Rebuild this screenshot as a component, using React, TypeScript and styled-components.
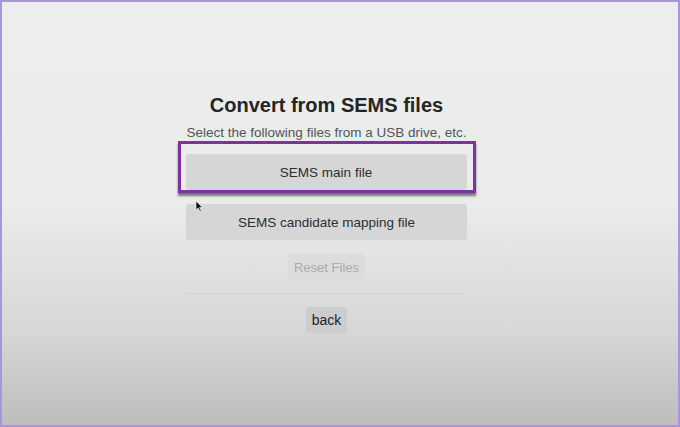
import styled, { createGlobalStyle } from "styled-components";

const GlobalStyle = createGlobalStyle`
  html, body {
    margin: 0;
    padding: 0;
  }
  body {
    font-family: "Liberation Sans", Arial, sans-serif;
  }
`;

const Screen = styled.div`
  box-sizing: border-box;
  width: 680px;
  height: 427px;
  border: 2px solid #ab95da;
  background: linear-gradient(
    #eceded 0%,
    #eaebeb 48%,
    #d6d7d7 78%,
    #bdbdbd 100%
  );
  display: flex;
  justify-content: center;
  padding: 92px 27px 0 0;
  overflow: hidden;
`;

const Column = styled.div`
  width: 281px;
  display: flex;
  flex-direction: column;
  align-items: center;
  position: relative;
`;

const Title = styled.h1`
  margin: 0;
  font-size: 20px;
  line-height: 23px;
  font-weight: 700;
  color: #252525;
  white-space: nowrap;
`;

const Subtitle = styled.p`
  margin: 8px 0 0;
  font-size: 13.5px;
  line-height: 16px;
  color: #555;
  white-space: nowrap;
`;

const FocusRing = styled.div`
  box-sizing: border-box;
  width: 298px;
  margin-top: 0;
  padding: 10px 5px 0;
  border: 3px solid #7d32a2;
  box-shadow: 0 3px 2px rgba(40, 40, 40, 0.6);
`;

const Button = styled.button<{ $wide?: boolean; $disabled?: boolean }>`
  box-sizing: border-box;
  border: none;
  border-radius: 3px;
  font-family: "Liberation Sans", Arial, sans-serif;
  cursor: pointer;
  width: ${(p) => (p.$wide ? "281px" : "auto")};
  height: ${(p) => (p.$wide ? "36px" : "26px")};
  padding: ${(p) => (p.$wide ? "0" : "0 6px")};
  font-size: ${(p) => (p.$wide ? "13.5px" : "13px")};
  background: ${(p) => (p.$disabled ? "#dcdcdc" : "#d6d6d6")};
  color: ${(p) => (p.$disabled ? "#ababab" : "#2e2e2e")};
`;

const BackButton = styled(Button)`
  font-size: 14px;
  color: #222;
  background: #cdcdcd;
`;

const Gap = styled.div<{ $h: number }>`
  height: ${(p) => p.$h}px;
`;

const Divider = styled.hr`
  width: 281px;
  margin: 0;
  border: none;
  border-top: 1px solid #d2d2d2;
`;

const Pointer = styled.svg`
  position: absolute;
  left: 9px;
  top: 106px;
`;

export default function App() {
  return (
    <>
      <GlobalStyle />
      <Screen>
        <Column>
          <Title>Convert from SEMS files</Title>
          <Subtitle>Select the following files from a USB drive, etc.</Subtitle>
          <FocusRing>
            <Button $wide>SEMS main file</Button>
          </FocusRing>
          <Gap $h={11} />
          <Button $wide>SEMS candidate mapping file</Button>
          <Gap $h={14} />
          <Button $disabled>Reset Files</Button>
          <Gap $h={13} />
          <Divider />
          <Gap $h={13} />
          <BackButton>back</BackButton>
          <Pointer width="8" height="12" viewBox="0 0 8 12">
            <path d="M1 1 L1 10 L3.2 8 L5 11.5 L6.3 10.9 L4.6 7.5 L7.4 7.5 Z" fill="#111" stroke="#fff" strokeWidth="0.6" />
          </Pointer>
        </Column>
      </Screen>
    </>
  );
}
